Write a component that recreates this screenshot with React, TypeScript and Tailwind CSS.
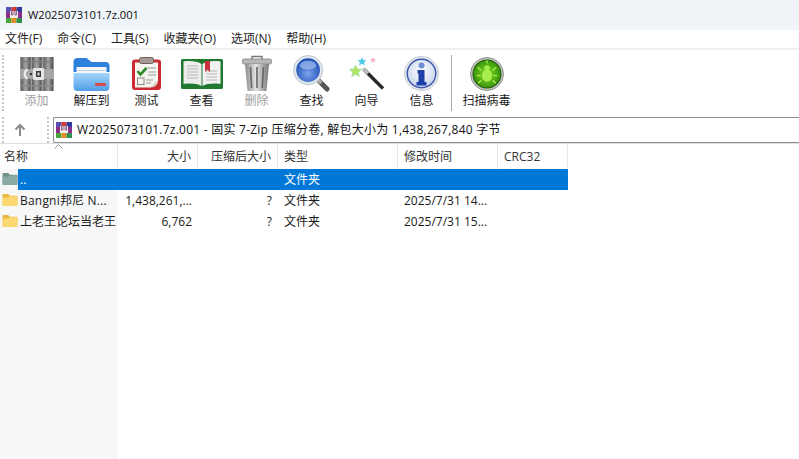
import React from "react";

const font = { fontFamily: '"Open Sans","Noto Sans CJK SC",sans-serif' };

function RarIcon({ size = 16 }: { size?: number }) {
  return (
    <svg width={size} height={size} viewBox="0 0 16 16" className="shrink-0">
      <rect x="0" y="0" width="5.5" height="5" fill="#5a4fb0" />
      <rect x="5.5" y="0" width="5" height="5" fill="#d23a35" />
      <rect x="10.5" y="0" width="5.5" height="5" fill="#34399c" />
      <rect x="0" y="5" width="16" height="6" fill="#8c2f8c" />
      <rect x="0" y="11" width="5.5" height="5" fill="#4aa53c" />
      <rect x="5.5" y="11" width="5" height="5" fill="#e08a28" />
      <rect x="10.5" y="11" width="5.5" height="5" fill="#2f8f4f" />
      <rect x="4" y="4" width="8" height="7" fill="#f2efe6" />
      <path d="M5.5 4v4h1.5V4M9 4v4h1.5V4" stroke="#6b3a7a" strokeWidth="0.8" fill="none" />
    </svg>
  );
}

function AddIcon() {
  return (
    <svg width="34" height="34" viewBox="0 0 34 34">
      <defs>
        <linearGradient id="bk" x1="0" x2="1" y1="0" y2="0">
          <stop offset="0" stopColor="#5e5e5e" />
          <stop offset="0.5" stopColor="#a8a8a8" />
          <stop offset="1" stopColor="#4e4e4e" />
        </linearGradient>
      </defs>
      <rect x="0" y="0" width="34" height="34" fill="#9a9a9a" />
      <rect x="1" y="0" width="9.5" height="34" fill="url(#bk)" />
      <rect x="12" y="0" width="9.5" height="34" fill="url(#bk)" />
      <rect x="23.5" y="0" width="9.5" height="34" fill="url(#bk)" />
      <rect x="0" y="4" width="34" height="1.5" fill="#7c7c7c" />
      <rect x="0" y="28" width="34" height="1.5" fill="#8a8a8a" />
      <rect x="0" y="12" width="34" height="10" fill="#a6a6a6" />
      <path d="M7.5 12.5a5 5 0 0 0 0 9" stroke="#eee" strokeWidth="2" fill="none" />
      <rect x="13" y="11" width="11" height="12" rx="1" fill="#e4e4e4" />
      <rect x="16" y="14" width="5" height="6" fill="#383838" />
      <rect x="17.5" y="15.5" width="2" height="3" fill="#ddd" />
      <rect x="10" y="16" width="2" height="2" fill="#333" />
    </svg>
  );
}

function ExtractIcon() {
  return (
    <svg width="37" height="34" viewBox="0 0 37 34">
      <defs>
        <linearGradient id="fb" x1="0" x2="0" y1="0" y2="1">
          <stop offset="0" stopColor="#a5d6f8" />
          <stop offset="1" stopColor="#4f9ce8" />
        </linearGradient>
      </defs>
      <path d="M0.5 5a4 4 0 0 1 4-4h9l5 4h14a4 4 0 0 1 4 4v6H0.5z" fill="#2f7fdc" />
      <rect x="3.5" y="10" width="30" height="7" fill="#f4f6f8" />
      <path d="M5 13.5h27" stroke="#a8b8c8" strokeDasharray="1.5 1" />
      <path d="M0.5 16h36v14a4 4 0 0 1-4 4h-28a4 4 0 0 1-4-4z" fill="url(#fb)" />
      <rect x="22" y="26" width="11" height="3" rx="1" fill="#d84a4a" />
    </svg>
  );
}

function TestIcon() {
  return (
    <svg width="29" height="33" viewBox="0 0 29 33">
      <rect x="0" y="2.5" width="29" height="30.5" rx="3" fill="#cb2a32" />
      <path d="M3 5.5h23v18l-7 7H3z" fill="#f6f4ee" />
      <path d="M19 30.5l7-7c0 4-3 7-7 7z" fill="#d8d4cc" />
      <rect x="7.5" y="0.5" width="14" height="6" rx="2" fill="#a59a95" stroke="#6e5f5a" />
      <path d="M5.5 14l3 3.5 6-6.5" stroke="#2d8a2d" strokeWidth="2.6" fill="none" />
      <path d="M15 11h9M16 15h8M16 18h8M14 23h7M14 26h5" stroke="#9a9a9a" strokeWidth="1" />
      <rect x="5.5" y="21" width="6.5" height="6.5" fill="none" stroke="#888" />
    </svg>
  );
}

function BookIcon() {
  return (
    <svg width="42" height="32" viewBox="0 0 42 32">
      <rect x="0" y="1" width="42" height="30" rx="1.5" fill="#1f7a2f" />
      <path d="M2.5 3.5C9 2.5 16 3 20.5 6v22C16 25.5 9 25 2.5 26z" fill="#ececec" />
      <path d="M39.5 3.5C33 2.5 26 3 21.5 6v22c4.5-2.5 11.5-3 18-2z" fill="#f2f2f2" />
      <path d="M6 8h11M6 11h11M6 14h11M6 17h11M6 20h11M25 13h11M25 16h11M25 19h11M25 22h11" stroke="#b5b5b5" strokeWidth="1" />
      <path d="M24 3h5v11l-2.5-2.5L24 14z" fill="#c9303a" />
    </svg>
  );
}

function TrashIcon() {
  return (
    <svg width="30" height="37" viewBox="0 0 30 37">
      <defs>
        <linearGradient id="tr" x1="0" x2="1" y1="0" y2="0">
          <stop offset="0" stopColor="#8a8a8a" />
          <stop offset="0.45" stopColor="#e2e2e2" />
          <stop offset="1" stopColor="#777" />
        </linearGradient>
      </defs>
      <path d="M10 4V1.5h10V4" stroke="#777" strokeWidth="1.4" fill="none" />
      <rect x="0.5" y="4" width="29" height="5" rx="1.5" fill="#b8b8b8" stroke="#777" strokeWidth="0.7" />
      <path d="M3 9h24l-2.5 27h-19z" fill="url(#tr)" />
      <path d="M8.5 12l1.2 21M15 12v21M21.5 12l-1.2 21" stroke="#666" strokeWidth="1.6" />
    </svg>
  );
}

function SearchIcon() {
  return (
    <svg width="37" height="37" viewBox="0 0 38 38">
      <defs>
        <radialGradient id="lens" cx="0.5" cy="0.65" r="0.6">
          <stop offset="0" stopColor="#7ba4ea" />
          <stop offset="1" stopColor="#1f4fb5" />
        </radialGradient>
      </defs>
      <path d="M26 26l9 9" stroke="#555" strokeWidth="5" strokeLinecap="round" />
      <path d="M25 25l4 4" stroke="#aaa" strokeWidth="4" />
      <circle cx="15.5" cy="15.5" r="15" fill="#dfe6ee" stroke="#aab4c0" strokeWidth="0.7" />
      <circle cx="15.5" cy="15.5" r="12.2" fill="url(#lens)" />
      <ellipse cx="15.5" cy="10.5" rx="8.5" ry="4.5" fill="#9db9ee" opacity="0.75" />
    </svg>
  );
}

function WizardIcon() {
  return (
    <svg width="36" height="35" viewBox="0 0 36 35">
      <path d="M15 13.5l19 19" stroke="#2a2a2a" strokeWidth="3.4" />
      <path d="M14 12.5l5 5" stroke="#bbb" strokeWidth="3.4" />
      <path d="M6.5 9l1.8 4 4.4.3-3.4 2.9 1.1 4.4-3.9-2.4-3.9 2.4 1.1-4.4L.3 13.3l4.4-.3z" fill="#b1e666" stroke="#86d8a0" strokeWidth="0.5" />
      <path d="M13 1l1.3 3 3.2.3-2.4 2 .8 3.2-2.9-1.7-2.900 1.700.8-3.200-2.400-2 3.200-.3z" fill="#52cbe8" />
      <path d="M24 1l.9 2 2.200.2-1.700 1.400.5 2.200-1.900-1.100-1.900 1.100.5-2.200-1.700-1.400 2.200-.2z" fill="#f5b0bd" />
    </svg>
  );
}

function InfoIcon() {
  return (
    <svg width="35" height="35" viewBox="0 0 35 35">
      <defs>
        <radialGradient id="ib" cx="0.5" cy="0.4" r="0.6">
          <stop offset="0" stopColor="#ffffff" />
          <stop offset="1" stopColor="#c7d3ec" />
        </radialGradient>
      </defs>
      <circle cx="17.5" cy="17.5" r="17" fill="#e3e6ec" stroke="#b9bec8" strokeWidth="0.7" />
      <circle cx="17.5" cy="17.5" r="14.3" fill="url(#ib)" stroke="#3b55ad" strokeWidth="1.4" />
      <circle cx="17.5" cy="9.5" r="3" fill="#6d8ed0" />
      <path d="M13.5 14h7v12h2v3.5h-10V26h2v-8.500h-1z" fill="#1e3fa8" />
    </svg>
  );
}

function ScanIcon() {
  return (
    <svg width="34" height="34" viewBox="0 0 33 33">
      <defs>
        <radialGradient id="sg" cx="0.5" cy="0.5" r="0.55">
          <stop offset="0" stopColor="#86e01f" />
          <stop offset="1" stopColor="#2f8c0c" />
        </radialGradient>
      </defs>
      <circle cx="16.5" cy="16.5" r="16" fill="#c5c9c2" stroke="#7d847a" strokeWidth="0.8" />
      <circle cx="16.5" cy="16.5" r="13.6" fill="url(#sg)" stroke="#25560f" strokeWidth="1" />
      <ellipse cx="16.5" cy="18" rx="5" ry="6" fill="#a7ee4d" />
      <circle cx="16.5" cy="10.5" r="2.6" fill="#a7ee4d" />
      <path d="M11 13l-3.5-3M22 13l3.500-3M10.500 18H6.500M22.500 18h4M11 22.500l-3 3M22 22.500l3 3M16.500 3.500v2.500" stroke="#a7ee4d" strokeWidth="1.3" />
    </svg>
  );
}

function Folder({ dim = false }: { dim?: boolean }) {
  const back = dim ? "#6f8f8c" : "#e8b93e";
  const front = dim ? "#8aa8a4" : "#fcd873";
  return (
    <svg width="16" height="13" viewBox="0 0 16 14" className="mb-[3px] shrink-0">
      <path d="M0 2a1 1 0 0 1 1-1h5l2 2h7a1 1 0 0 1 1 1v9a1 1 0 0 1-1 1H1a1 1 0 0 1-1-1z" fill={back} />
      <path d="M0 5l6-.5L8 3.500h8V13a1 1 0 0 1-1 1H1a1 1 0 0 1-1-1z" fill={front} />
    </svg>
  );
}

const tools = [
  { label: "添加", icon: <AddIcon />, off: true },
  { label: "解压到", icon: <ExtractIcon /> },
  { label: "测试", icon: <TestIcon /> },
  { label: "查看", icon: <BookIcon /> },
  { label: "删除", icon: <TrashIcon />, off: true },
  { label: "查找", icon: <SearchIcon /> },
  { label: "向导", icon: <WizardIcon /> },
  { label: "信息", icon: <InfoIcon /> },
];

function Tool({ label, icon, off }: { label: string; icon: React.ReactNode; off?: boolean }) {
  return (
    <div className="flex w-[55px] shrink-0 flex-col items-center">
      <div className="flex h-[37px] items-center justify-center">{icon}</div>
      <div className={`mt-[1px] text-[12px] leading-[16px] ${off ? "text-[#a0a0a0]" : "text-[#1a1a1a]"}`}>{label}</div>
    </div>
  );
}

function Grip({ className }: { className: string }) {
  return <div className={`w-[2px] shrink-0 border-l-2 border-dotted border-[#c8c8c8] ${className}`} />;
}

const menus = ["文件(F)", "命令(C)", "工具(S)", "收藏夹(O)", "选项(N)", "帮助(H)"];

const Head = ({ w, right, children }: { w: string; right?: boolean; children: React.ReactNode }) => (
  <div className={`flex h-full shrink-0 items-center border-r border-[#e5e5e5] px-[6px] text-[#333] ${w} ${right ? "justify-end" : ""}`}>
    {children}
  </div>
);

export default function App() {
  return (
    <div className="flex h-[459px] w-[799px] flex-col overflow-hidden bg-white text-[12px] text-[#1a1a1a]" style={font}>
      <div className="flex h-[30px] shrink-0 items-center gap-[6px] bg-[#eff4f9] pl-[6px]">
        <RarIcon />
        <span className="text-[11.2px] text-[#111]">W2025073101.7z.001</span>
      </div>
      <div className="flex h-[20px] shrink-0 items-center border-b-2 border-[#f0f0f0] bg-white pl-[5px]">
        <div className="flex gap-[15px] leading-[16px] text-[#222]">
          {menus.map((m) => (
            <span key={m}>{m}</span>
          ))}
        </div>
      </div>
      <div className="flex h-[63px] shrink-0 items-start pl-[2px] pt-[5px]">
        <Grip className="mr-[5px] h-[56px]" />
        <div className="flex">
          {tools.map((t) => (
            <Tool key={t.label} {...t} />
          ))}
        </div>
        <div className="ml-[2px] h-[56px] w-px shrink-0 bg-[#a8a8a8]" />
        <div className="ml-[7px]">
          <Tool label="扫描病毒" icon={<ScanIcon />} />
        </div>
      </div>
      <div className="flex h-[31px] shrink-0 items-start border-b border-[#e0e0e0] pl-[2px] pt-[4px]">
        <Grip className="h-[26px]" />
        <div className="flex h-[25px] w-[43px] shrink-0 items-center justify-center pr-[12px]">
          <svg width="14" height="14" viewBox="0 0 14 14">
            <path d="M7 13V2M2.500 6.500L7 2l4.500 4.500" stroke="#8a8a8a" strokeWidth="2" fill="none" />
          </svg>
        </div>
        <Grip className="h-[26px]" />
        <div className="ml-[4px] flex h-[26px] flex-1 items-center gap-[5px] rounded-l-[2px] border border-r-0 border-[#8f8f8f] pl-[2px]">
          <RarIcon />
          <span className="text-[12px] tracking-[0.24px] text-[#111]">W2025073101.7z.001 - 固实 7-Zip 压缩分卷, 解包大小为 1,438,267,840 字节</span>
        </div>
      </div>
      <div className="relative flex h-[25px] shrink-0 items-stretch">
        <Head w="w-[118px]">
          <span className="-ml-[2px]">名称</span>
        </Head>
        <Head w="w-[80px]" right>大小</Head>
        <Head w="w-[80px]" right>压缩后大小</Head>
        <Head w="w-[120px]">类型</Head>
        <Head w="w-[100px]">修改时间</Head>
        <Head w="w-[70px]">CRC32</Head>
        <svg width="9" height="5" viewBox="0 0 9 5" className="absolute left-[54px] top-0">
          <path d="M0.500 4.500L4.500 0.500l4 4" stroke="#9a9a9a" fill="none" />
        </svg>
      </div>
      <div className="flex flex-1 items-start bg-[linear-gradient(to_right,#f7f7f7_118px,#ffffff_118px)]">
        <div className="flex flex-col">
          {[
            { name: "..", size: "", packed: "", date: "", sel: true },
            { name: "Bangni邦尼 N...", size: "1,438,261,...", packed: "?", date: "2025/7/31 14..." },
            { name: "上老王论坛当老王", size: "6,762", packed: "?", date: "2025/7/31 15..." },
          ].map((r) => (
            <div key={r.name} className="flex h-[21px] items-center">
              <div className="flex h-full w-[118px] shrink-0 items-center pl-[2px]">
                <Folder dim={!!r.sel} />
                <div className={`flex h-full flex-1 items-center whitespace-nowrap pl-[2px] ${r.sel ? "bg-[#0078d7] text-white" : ""} ${r.name.startsWith("B") ? "tracking-[0.2px]" : ""}`}>{r.name}</div>
              </div>
              <div className={`flex h-full w-[450px] items-center ${r.sel ? "bg-[#0078d7] text-white" : ""}`}>
                <div className="w-[80px] shrink-0 pr-[6px] text-right">{r.size}</div>
                <div className="w-[80px] shrink-0 pr-[6px] text-right">{r.packed}</div>
                <div className="w-[120px] shrink-0 pl-[6px]">文件夹</div>
                <div className="w-[100px] shrink-0 pl-[6px]">{r.date}</div>
              </div>
            </div>
          ))}
        </div>
      </div>
    </div>
  );
}
